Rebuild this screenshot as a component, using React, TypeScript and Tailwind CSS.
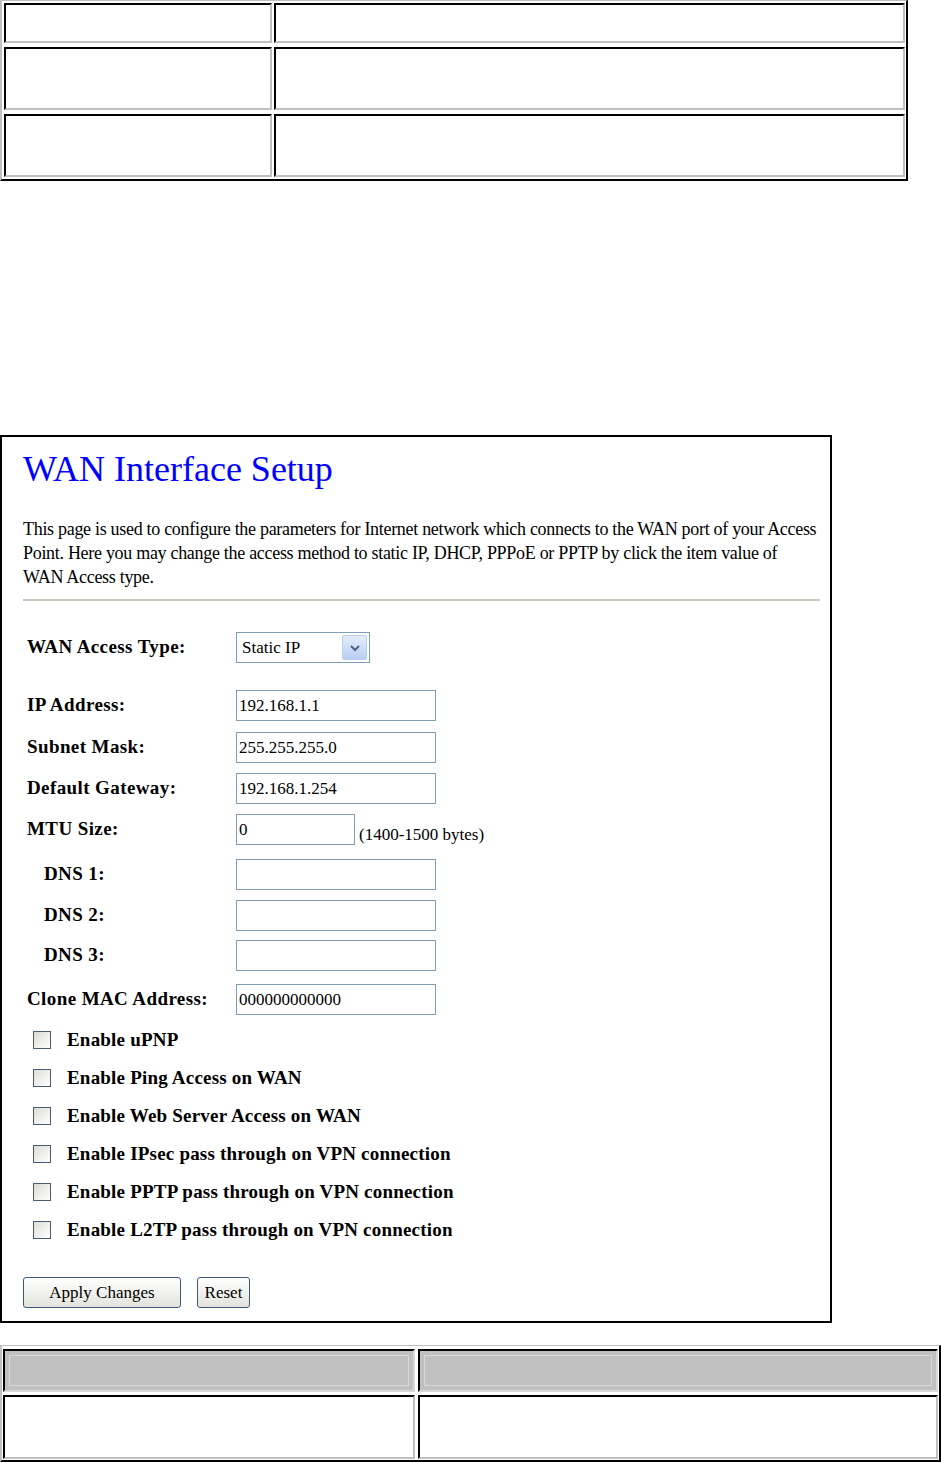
import React from 'react';

const serif = { fontFamily: '"Liberation Serif", "Times New Roman", serif' };

function Cell({ className = '', children }: { className?: string; children?: React.ReactNode }) {
   return (
      <div className={`border-t-2 border-l-2 border-b-2 border-r-2 border-t-black border-l-black border-b-[#c0c0c0] border-r-[#c0c0c0] bg-white ${className}`}>
         {children}
      </div>
   );
}

function TextBox({ value = '', width = 'w-[200px]' }: { value?: string; width?: string }) {
   return (
      <div className={`${width} h-[31px] border border-[#7f9db9] bg-white px-[2px] flex items-center text-[17px] text-black leading-none`}>
         {value}
      </div>
   );
}

function FormRow({ label, indent = false, mt, children }: { label: string; indent?: boolean; mt: string; children: React.ReactNode }) {
   return (
      <div className={`flex items-center ${mt}`}>
         <div className={`w-[209px] font-bold text-[19px] tracking-[0.4px] text-black ${indent ? 'pl-[17px]' : ''}`}>{label}</div>
         {children}
      </div>
   );
}

function Check({ label }: { label: string }) {
   return (
      <div className="flex items-center h-[38px]">
         <div className="ml-[10px] w-[18px] h-[18px] border border-[#4a5a70] bg-gradient-to-br from-[#dcdcd6] to-white" />
         <div className="ml-[16px] font-bold text-[19px] tracking-[0.2px] text-black">{label}</div>
      </div>
   );
}

export default function App() {
   return (
      <div className="w-[941px] min-h-[1463px] bg-white" style={serif}>
         {/* Top table */}
         <div className="w-[908px] border-t border-l-2 border-b-2 border-r-2 border-t-[#c0c0c0] border-l-[#c0c0c0] border-b-black border-r-black pt-[2px] pl-[2px] pr-[1px] pb-[2px] flex flex-col gap-[4px]">
            <div className="flex gap-[2px]">
               <Cell className="w-[268px] h-[40px]" />
               <Cell className="flex-1 h-[40px]" />
            </div>
            <div className="flex gap-[2px]">
               <Cell className="w-[268px] h-[63px]" />
               <Cell className="flex-1 h-[63px]" />
            </div>
            <div className="flex gap-[2px]">
               <Cell className="w-[268px] h-[63px]" />
               <Cell className="flex-1 h-[63px]" />
            </div>
         </div>

         {/* WAN panel */}
         <div className="mt-[254px] w-[832px] h-[888px] border-2 border-black pl-[21px] pr-[10px]">
            <h1 className="text-[36px] leading-[40px] text-[#0000ff] pt-[12px]">WAN Interface Setup</h1>
            <p className="mt-[28px] text-[18px] leading-[24px] text-black tracking-[-0.3px]">
               This page is used to configure the parameters for Internet network which connects to the WAN port of your Access
               <br />
               Point. Here you may change the access method to static IP, DHCP, PPPoE or PPTP by click the item value of
               <br />
               WAN Access type.
            </p>
            <div className="mt-[10px] h-[2px] bg-[#c8c8bc] w-[797px]" />

            <div className="pl-[4px]">
               <FormRow label="WAN Access Type:" mt="mt-[31px]">
                  <div className="w-[134px] h-[31px] border border-[#7f9db9] bg-white flex items-center justify-between pl-[5px] pr-[2px]">
                     <span className="text-[17px]">Static IP</span>
                     <div className="w-[25px] h-[25px] rounded-[2px] border border-[#b8cdf0] bg-gradient-to-b from-[#e4ecfb] to-[#b9cef5] flex items-center justify-center">
                        <svg width="10" height="8" viewBox="0 0 10 8">
                           <path d="M1 2 L5 6 L9 2" fill="none" stroke="#4d6185" strokeWidth="2" />
                        </svg>
                     </div>
                  </div>
               </FormRow>
               <FormRow label="IP Address:" mt="mt-[27px]">
                  <TextBox value="192.168.1.1" />
               </FormRow>
               <FormRow label="Subnet Mask:" mt="mt-[11px]">
                  <TextBox value="255.255.255.0" />
               </FormRow>
               <FormRow label="Default Gateway:" mt="mt-[10px]">
                  <TextBox value="192.168.1.254" />
               </FormRow>
               <FormRow label="MTU Size:" mt="mt-[10px]">
                  <TextBox value="0" width="w-[119px]" />
                  <span className="ml-[4px] self-end text-[17px] leading-[20px]">(1400-1500 bytes)</span>
               </FormRow>
               <FormRow label="DNS 1:" indent mt="mt-[14px]">
                  <TextBox />
               </FormRow>
               <FormRow label="DNS 2:" indent mt="mt-[10px]">
                  <TextBox />
               </FormRow>
               <FormRow label="DNS 3:" indent mt="mt-[9px]">
                  <TextBox />
               </FormRow>
               <FormRow label="Clone MAC Address:" mt="mt-[13px]">
                  <TextBox value="000000000000" />
               </FormRow>
            </div>

            <div className="mt-[6px]">
               <Check label="Enable uPNP" />
               <Check label="Enable Ping Access on WAN" />
               <Check label="Enable Web Server Access on WAN" />
               <Check label="Enable IPsec pass through on VPN connection" />
               <Check label="Enable PPTP pass through on VPN connection" />
               <Check label="Enable L2TP pass through on VPN connection" />
            </div>

            <div className="mt-[28px] flex gap-[16px]">
               <button className="w-[158px] h-[31px] rounded-[3px] border border-[#3c5a80] bg-gradient-to-b from-white to-[#e3e3dc] text-[17px]">
                  Apply Changes
               </button>
               <button className="w-[53px] h-[31px] rounded-[3px] border border-[#3c5a80] bg-gradient-to-b from-white to-[#e3e3dc] text-[17px]">
                  Reset
               </button>
            </div>
         </div>

         {/* Bottom table */}
         <div className="mt-[22px] w-[941px] border-t border-l-2 border-b-2 border-r-2 border-t-[#c0c0c0] border-l-[#c0c0c0] border-b-black border-r-black pt-[3px] pl-[1px] pr-[1px] pb-[1px] flex flex-col gap-[3px]">
            <div className="flex gap-[3px]">
               <div className="w-[412px] h-[43px] border-t-2 border-l-2 border-b-2 border-r-2 border-t-black border-l-black border-b-[#d8d8d8] border-r-[#d8d8d8] bg-[#c0c0c0] p-[4px]">
                  <div className="h-full border border-[#d8d8d8]" />
               </div>
               <div className="flex-1 h-[43px] border-t-2 border-l-2 border-b-2 border-r-2 border-t-black border-l-black border-b-[#d8d8d8] border-r-[#d8d8d8] bg-[#c0c0c0] p-[4px]">
                  <div className="h-full border border-[#d8d8d8]" />
               </div>
            </div>
            <div className="flex gap-[3px]">
               <Cell className="w-[412px] h-[64px]" />
               <Cell className="flex-1 h-[64px]" />
            </div>
         </div>
      </div>
   );
}
